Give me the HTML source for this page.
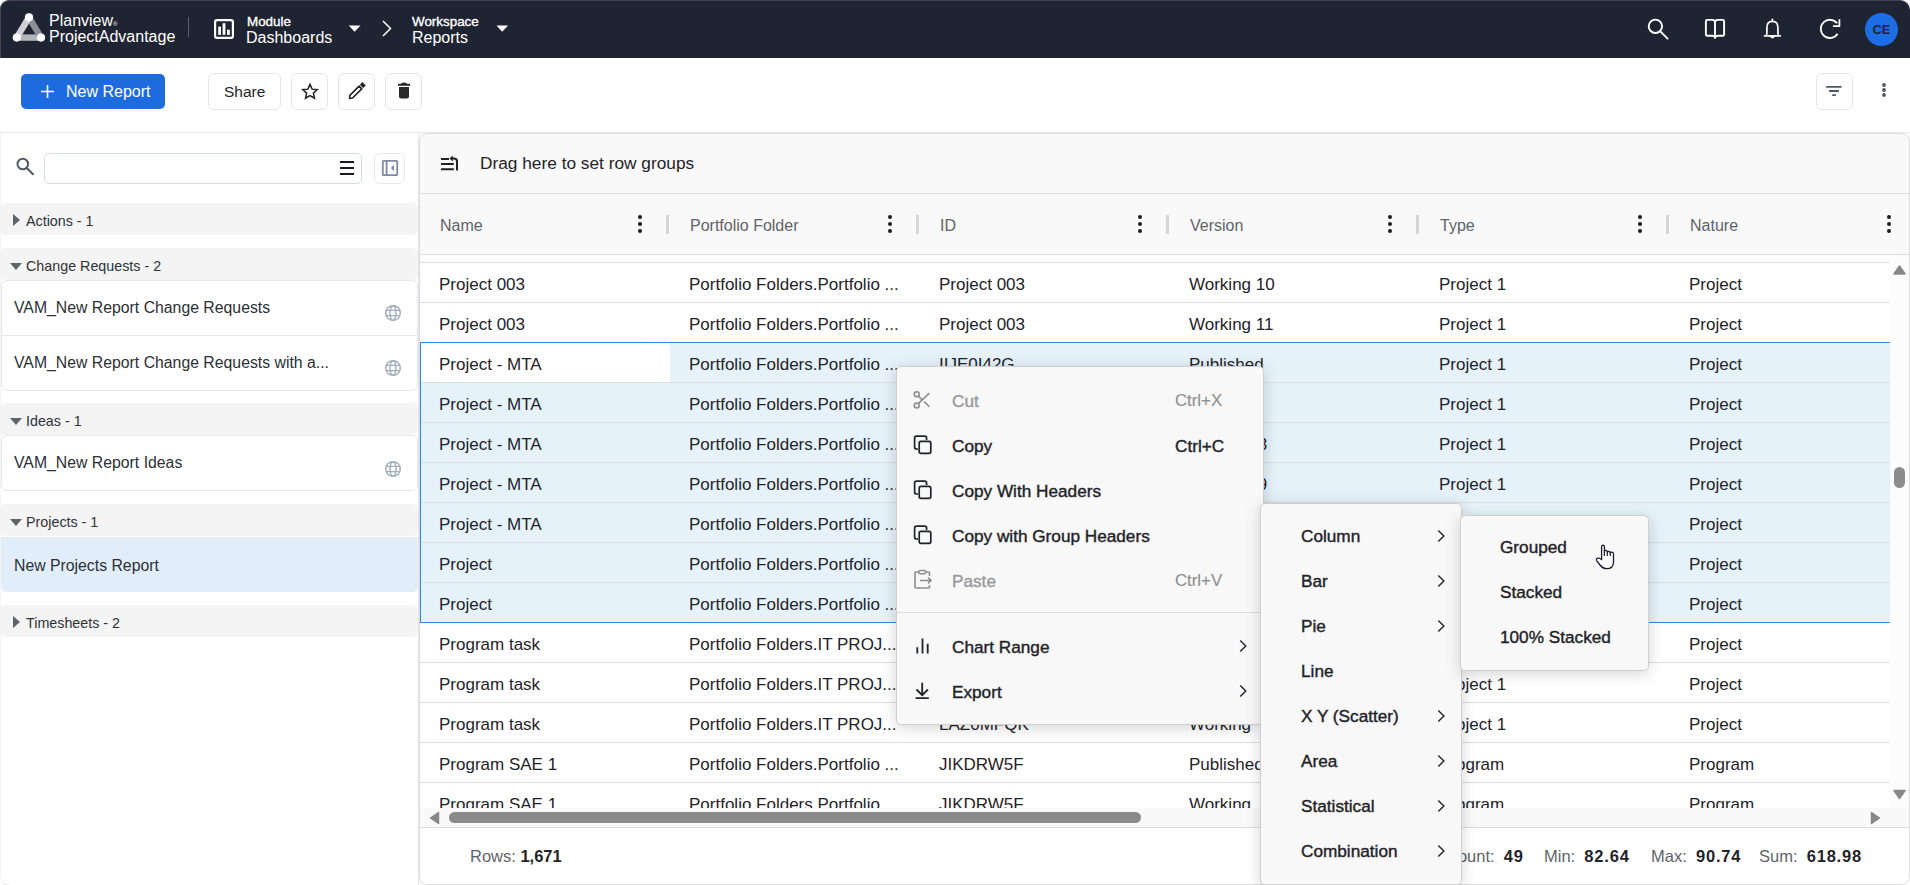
<!DOCTYPE html><html><head><meta charset="utf-8"><style>
*{box-sizing:border-box}
html,body{margin:0;padding:0}
body{width:1910px;height:885px;overflow:hidden;position:relative;background:#fff;font-family:"Liberation Sans",sans-serif;color:#1f2328}
.a{position:absolute}
.nw{white-space:nowrap}
svg.i{position:absolute;overflow:visible}
#top{left:0;top:0;width:1910px;height:58px;background:#1f2433;border-radius:9px 10px 0 0;border-top:1px solid #3f4451;border-left:1px solid #3f4451}
.tw{position:absolute;color:#fff;white-space:nowrap}
#tb{left:0;top:58px;width:1910px;height:75px;background:#fff;border-bottom:1px solid #e5e8ec}
.btn{position:absolute;border:1px solid #e3e6ea;border-radius:6px;background:#fff}
#lp{left:0;top:133px;width:419px;height:753px;background:#fff;border-right:1px solid #e3e6ea;border-left:1px solid #f4f4f4;border-bottom:1px solid #e2e2e2;border-bottom-left-radius:10px}
.gh{position:absolute;left:0;width:418px;height:32px;background:#f4f4f4;border-radius:6px;font-size:14.3px;color:#2d3338}
.gh .t{position:absolute;left:26px;top:9.5px;white-space:nowrap}
.tri-r{position:absolute;left:13px;top:11px;width:0;height:0;border-top:6px solid transparent;border-bottom:6px solid transparent;border-left:7px solid #5f6468}
.tri-d{position:absolute;left:10px;top:15px;width:0;height:0;border-left:6px solid transparent;border-right:6px solid transparent;border-top:7px solid #5f6468}
.it{position:absolute;left:1px;width:417px;background:#fff;border:1px solid #e5e8ec;font-size:15.8px;color:#2b3035}
.it .t{position:absolute;left:12px;white-space:nowrap}
#grid{left:419px;top:133px;width:1491px;height:752px;background:#f9f9f9;border:1px solid #dcdcdc;border-radius:8px;overflow:hidden}
.hdt{position:absolute;font-size:16px;color:#5f6368;white-space:nowrap}
.kb{position:absolute;width:4px;height:18px}
.kb i{position:absolute;left:0;width:4px;height:4px;border-radius:50%;background:#1d1d1f}
.rz{position:absolute;width:3px;height:19px;background:#d6d6d6}
.row{position:absolute;left:0;width:1470px;height:40px;background:#fff;border-bottom:1px solid #dedede}
.row.sel{background:#e5f2fa}
.cell{position:absolute;top:12px;font-size:17px;color:#1f2328;white-space:nowrap}
.menu{position:absolute;background:#f8f8f8;border:1px solid #cfcfcf;border-radius:5px;box-shadow:0 3px 16px rgba(0,0,0,.17)}
.mi{position:absolute;font-size:17.2px;font-weight:400;-webkit-text-stroke:.4px currentColor;color:#1f2328;white-space:nowrap}
.dis{color:#9a9a9a}
.chev{position:absolute;width:8px;height:12px}
</style></head><body>
<div id="top" class="a"></div>
<svg class="i" style="left:8px;top:8px" width="45" height="40" viewBox="8 8 45 40" ><line x1="16.8" y1="37.6" x2="41" y2="37.6" stroke="#b4b5b9" stroke-width="6.4"/><line x1="29" y1="17.3" x2="41" y2="37.6" stroke="#8d8f97" stroke-width="6.4"/><line x1="29" y1="17.3" x2="16.8" y2="37.6" stroke="#d0d1d5" stroke-width="6.4"/><circle cx="29" cy="17.3" r="4.1" fill="#fff"/><circle cx="16.8" cy="37.6" r="4.1" fill="#fff"/><circle cx="41" cy="37.6" r="4.1" fill="#fff"/></svg>
<div class="tw" style="left:49px;top:12px;font-size:16px">Planview<span style="font-size:6px">&#174;</span></div>
<div class="tw" style="left:49px;top:28px;font-size:16px">ProjectAdvantage</div>
<div class="a" style="left:188px;top:17px;width:1px;height:20px;background:#5a5f6b"></div>
<svg class="i" style="left:210px;top:15px" width="30" height="30" viewBox="210 15 30 30" ><rect x="215.1" y="20.1" width="17.8" height="17.8" rx="2" fill="none" stroke="#fff" stroke-width="2.2"/><rect x="218.2" y="26.6" width="2.8" height="8.3" fill="#fff"/><rect x="222.6" y="23.2" width="2.8" height="11.7" fill="#fff"/><rect x="227" y="29.7" width="2.8" height="5.2" fill="#fff"/></svg>
<div class="tw" style="left:247px;top:13.5px;font-size:13.4px;-webkit-text-stroke:.35px #fff">Module</div>
<div class="tw" style="left:246px;top:29px;font-size:16px">Dashboards</div>
<svg class="i" style="left:345px;top:22px" width="20" height="14" viewBox="345 22 20 14" ><path d="M348.7 25.4 L360.5 25.4 L354.6 31.8 Z" fill="#fff"/></svg>
<svg class="i" style="left:378px;top:18px" width="18" height="22" viewBox="378 18 18 22" ><path d="M383 21 L390.5 28.5 L383 36" fill="none" stroke="#fff" stroke-width="1.5"/></svg>
<div class="tw" style="left:412px;top:13.5px;font-size:13.4px;-webkit-text-stroke:.35px #fff">Workspace</div>
<div class="tw" style="left:412px;top:29px;font-size:16px">Reports</div>
<svg class="i" style="left:493px;top:22px" width="20" height="14" viewBox="493 22 20 14" ><path d="M496.5 25.4 L508 25.4 L502.2 31.8 Z" fill="#fff"/></svg>
<svg class="i" style="left:1640px;top:15px" width="35" height="30" viewBox="1640 15 35 30" ><circle cx="1655.4" cy="26.3" r="6.7" fill="none" stroke="#fff" stroke-width="1.9"/><path d="M1660.3 31.3 L1667.6 38.6" stroke="#fff" stroke-width="1.9" stroke-linecap="round"/></svg>
<svg class="i" style="left:1700px;top:15px" width="30" height="30" viewBox="1700 15 30 30" ><path d="M1715 22.5 Q1715 19.9 1712.5 19.9 L1707.3 19.9 Q1705.9 19.9 1705.9 21.3 L1705.9 34.4 Q1705.9 35.7 1707.3 35.7 L1712.3 35.7 Q1714.2 35.7 1715 37.8 Q1715.8 35.7 1717.7 35.7 L1722.7 35.7 Q1724.1 35.7 1724.1 34.4 L1724.1 21.3 Q1724.1 19.9 1722.7 19.9 L1717.5 19.9 Q1715 19.9 1715 22.5 Z M1715 22.5 L1715 37" fill="none" stroke="#fff" stroke-width="1.9" stroke-linejoin="round"/></svg>
<svg class="i" style="left:1758px;top:15px" width="30" height="30" viewBox="1758 15 30 30" ><path d="M1764.5 35.8 L1780.3 35.8 M1766.2 35.8 Q1766.9 34.5 1766.9 32 L1766.9 27.5 Q1766.9 21.3 1772.4 21.3 Q1777.9 21.3 1777.9 27.5 L1777.9 32 Q1777.9 34.5 1778.6 35.8 M1772.4 21.3 L1772.4 19.3 M1770.7 36.2 Q1772.4 39 1774.1 36.2" fill="none" stroke="#fff" stroke-width="1.7" stroke-linejoin="round" stroke-linecap="round"/></svg>
<svg class="i" style="left:1815px;top:15px" width="32" height="30" viewBox="1815 15 32 30" ><path d="M1837.6 33.7 A9.1 9.1 0 1 1 1837.1 23.3" fill="none" stroke="#fff" stroke-width="1.8"/><path d="M1832.9 26.1 L1839.4 26.1 L1839.4 19.2" fill="none" stroke="#fff" stroke-width="1.8" stroke-linejoin="round"/></svg>
<div class="a" style="left:1865px;top:12.5px;width:33px;height:33px;border-radius:50%;background:#1b6ee3"></div>
<div class="a" style="left:1865px;top:22px;width:33px;text-align:center;font-size:13px;font-weight:700;color:#1f2433">CE</div>
<div id="tb" class="a"></div>
<div class="a" style="left:21px;top:74px;width:144px;height:35px;background:#1e6be0;border-radius:5px"></div>
<svg class="i" style="left:38px;top:82px" width="20" height="20" viewBox="38 82 20 20" ><path d="M47.5 85 L47.5 98 M41 91.5 L54 91.5" stroke="#fff" stroke-width="1.6"/></svg>
<div class="tw" style="left:66px;top:83px;font-size:16px">New Report</div>
<div class="btn" style="left:208px;top:73px;width:73px;height:37px"></div>
<div class="a nw" style="left:224px;top:83px;font-size:15.5px;color:#1f2328">Share</div>
<div class="btn" style="left:291px;top:73px;width:37px;height:37px"></div>
<div class="btn" style="left:338px;top:73px;width:37px;height:37px"></div>
<div class="btn" style="left:385px;top:73px;width:37px;height:37px"></div>
<svg class="i" style="left:298px;top:80px" width="25" height="25" viewBox="298 80 25 25" ><path d="M310.00 84.40 L312.09 89.13 L317.23 89.65 L313.38 93.10 L314.47 98.15 L310.00 95.55 L305.53 98.15 L306.62 93.10 L302.77 89.65 L307.91 89.13 Z" fill="none" stroke="#222" stroke-width="1.5" stroke-linejoin="miter"/></svg>
<svg class="i" style="left:345px;top:80px" width="25" height="25" viewBox="345 80 25 25" ><g transform="translate(356.6 91.3) rotate(-45)"><path d="M5.4 -1.9 L-7.6 -1.9 L-10 0 L-7.6 1.9 L5.4 1.9 Z" fill="none" stroke="#222" stroke-width="1.6" stroke-linejoin="round"/><rect x="7" y="-2.4" width="3.6" height="4.8" fill="#222"/></g></svg>
<svg class="i" style="left:393px;top:80px" width="25" height="25" viewBox="393 80 25 25" ><path d="M398 84.8 L410.2 84.8" stroke="#2a2a2a" stroke-width="2"/><path d="M401.5 84 Q404 82.6 406.5 84" stroke="#2a2a2a" stroke-width="1.6" fill="none"/><path d="M399 87 L409 87 L409 96.5 Q409 98.4 407 98.4 L401 98.4 Q399 98.4 399 96.5 Z" fill="#2a2a2a"/></svg>
<div class="btn" style="left:1816px;top:73px;width:37px;height:37px"></div>
<svg class="i" style="left:1820px;top:80px" width="30" height="25" viewBox="1820 80 30 25" ><path d="M1826.2 86.9 L1841.6 86.9 M1829.1 91 L1838.9 91 M1832.2 95.1 L1835.9 95.1" stroke="#4f5863" stroke-width="1.9"/></svg>
<svg class="i" style="left:1878px;top:80px" width="12" height="20" viewBox="1878 80 12 20" ><circle cx="1884" cy="85" r="1.9" fill="#4f5863"/><circle cx="1884" cy="90" r="1.9" fill="#4f5863"/><circle cx="1884" cy="95" r="1.9" fill="#4f5863"/></svg>
<div id="lp" class="a"></div>
<svg class="i" style="left:12px;top:152px" width="28" height="28" viewBox="12 152 28 28" ><circle cx="22.8" cy="164" r="5.3" fill="none" stroke="#4d5a66" stroke-width="2"/><path d="M26.8 168 L33 174.2" stroke="#4d5a66" stroke-width="2" stroke-linecap="round"/></svg>
<div class="a" style="left:44px;top:153px;width:318px;height:31px;border:1px solid #d5dce3;border-radius:5px"></div>
<svg class="i" style="left:335px;top:155px" width="25" height="25" viewBox="335 155 25 25" ><path d="M340 162 L354 162 M340 168 L354 168 M340 174 L354 174" stroke="#1a1a24" stroke-width="2"/></svg>
<div class="btn" style="left:374px;top:153px;width:31px;height:31px;border-color:#e5e8ec"></div>
<svg class="i" style="left:378px;top:156px" width="25" height="25" viewBox="378 156 25 25" ><rect x="382.8" y="160.8" width="14.4" height="14.4" rx="1" fill="none" stroke="#7d8aa3" stroke-width="1.8"/><path d="M386.6 161 L386.6 175" stroke="#7d8aa3" stroke-width="1.8"/><path d="M394 164.8 L390.8 168 L394 171.2 Z" fill="#7d8aa3"/></svg>
<div class="gh" style="top:203px"><div class="tri-r"></div><div class="t">Actions - 1</div></div>
<div class="gh" style="top:248px"><div class="tri-d"></div><div class="t">Change Requests - 2</div></div>
<div class="it" style="top:280px;height:56px;border-radius:6px 6px 0 0"><div class="t" style="top:18px">VAM_New Report Change Requests</div></div>
<svg class="i" style="left:383px;top:303px" width="20" height="20" viewBox="383 303 20 20" ><circle cx="393" cy="313" r="7.3" fill="none" stroke="#a3afbd" stroke-width="1.5"/><ellipse cx="393" cy="313" rx="3" ry="7.3" fill="none" stroke="#a3afbd" stroke-width="1.4"/><path d="M386 310.4 L400 310.4 M386 315.6 L400 315.6" stroke="#a3afbd" stroke-width="1.4"/></svg>
<div class="it" style="top:335px;height:56px;border-radius:0 0 6px 6px"><div class="t" style="top:18px">VAM_New Report Change Requests with a...</div></div>
<svg class="i" style="left:383px;top:358px" width="20" height="20" viewBox="383 358 20 20" ><circle cx="393" cy="368" r="7.3" fill="none" stroke="#a3afbd" stroke-width="1.5"/><ellipse cx="393" cy="368" rx="3" ry="7.3" fill="none" stroke="#a3afbd" stroke-width="1.4"/><path d="M386 365.4 L400 365.4 M386 370.6 L400 370.6" stroke="#a3afbd" stroke-width="1.4"/></svg>
<div class="gh" style="top:403px"><div class="tri-d"></div><div class="t">Ideas - 1</div></div>
<div class="it" style="top:435px;height:56px;border-radius:6px"><div class="t" style="top:18px">VAM_New Report Ideas</div></div>
<svg class="i" style="left:383px;top:459px" width="20" height="20" viewBox="383 459 20 20" ><circle cx="393" cy="469" r="7.3" fill="none" stroke="#a3afbd" stroke-width="1.5"/><ellipse cx="393" cy="469" rx="3" ry="7.3" fill="none" stroke="#a3afbd" stroke-width="1.4"/><path d="M386 466.4 L400 466.4 M386 471.6 L400 471.6" stroke="#a3afbd" stroke-width="1.4"/></svg>
<div class="gh" style="top:504px"><div class="tri-d"></div><div class="t">Projects - 1</div></div>
<div class="a" style="left:1px;top:537px;width:417px;height:55px;background:#e1eefa;border-radius:0 0 5px 5px"></div>
<div class="a nw" style="left:14px;top:557px;font-size:15.8px;color:#2b3035">New Projects Report</div>
<div class="gh" style="top:605px"><div class="tri-r"></div><div class="t">Timesheets - 2</div></div>
<div id="grid" class="a">
<div class="a" style="left:0;top:59px;width:1491px;height:1px;background:#dedede"></div>
<svg class="i" style="left:18px;top:18px" width="25" height="25" viewBox="438 152 25 25" ><path d="M441 158.9 L449 158.9 M441 164.1 L453.8 164.1 M441 169.2 L453.8 169.2" stroke="#222" stroke-width="2"/><path d="M457 170.5 L457 161.5 Q457 158.5 454 158.5 L451.5 158.5" fill="none" stroke="#222" stroke-width="2"/><path d="M449.5 158.5 L452.8 155.6 L452.8 161.4 Z" fill="#222"/></svg>
<div class="a nw" style="left:60px;top:19px;font-size:17.3px;color:#1f2328">Drag here to set row groups</div>
<div class="a" style="left:0;top:120px;width:1491px;height:1px;background:#dedede"></div>
<div class="a" style="left:0;top:121px;width:1470px;height:7px;background:#fff"></div>
<div class="a" style="left:0;top:128px;width:1470px;height:1px;background:#dedede"></div>
<div class="hdt" style="left:20px;top:83px">Name</div>
<div class="kb" style="left:218px;top:81px"><i style="top:0"></i><i style="top:7px"></i><i style="top:14px"></i></div>
<div class="rz" style="left:246px;top:81px"></div>
<div class="hdt" style="left:270px;top:83px">Portfolio Folder</div>
<div class="kb" style="left:468px;top:81px"><i style="top:0"></i><i style="top:7px"></i><i style="top:14px"></i></div>
<div class="rz" style="left:496px;top:81px"></div>
<div class="hdt" style="left:520px;top:83px">ID</div>
<div class="kb" style="left:718px;top:81px"><i style="top:0"></i><i style="top:7px"></i><i style="top:14px"></i></div>
<div class="rz" style="left:746px;top:81px"></div>
<div class="hdt" style="left:770px;top:83px">Version</div>
<div class="kb" style="left:968px;top:81px"><i style="top:0"></i><i style="top:7px"></i><i style="top:14px"></i></div>
<div class="rz" style="left:996px;top:81px"></div>
<div class="hdt" style="left:1020px;top:83px">Type</div>
<div class="kb" style="left:1218px;top:81px"><i style="top:0"></i><i style="top:7px"></i><i style="top:14px"></i></div>
<div class="rz" style="left:1246px;top:81px"></div>
<div class="hdt" style="left:1270px;top:83px">Nature</div>
<div class="kb" style="left:1467px;top:81px"><i style="top:0"></i><i style="top:7px"></i><i style="top:14px"></i></div>
<div class="a" style="left:0;top:129px;width:1470px;height:545px;overflow:hidden">
<div class="row" style="top:0px">
<div class="cell" style="left:19px">Project 003</div>
<div class="cell" style="left:269px">Portfolio Folders.Portfolio ...</div>
<div class="cell" style="left:519px">Project 003</div>
<div class="cell" style="left:769px">Working 10</div>
<div class="cell" style="left:1019px">Project 1</div>
<div class="cell" style="left:1269px">Project</div>
</div>
<div class="row" style="top:40px">
<div class="cell" style="left:19px">Project 003</div>
<div class="cell" style="left:269px">Portfolio Folders.Portfolio ...</div>
<div class="cell" style="left:519px">Project 003</div>
<div class="cell" style="left:769px">Working 11</div>
<div class="cell" style="left:1019px">Project 1</div>
<div class="cell" style="left:1269px">Project</div>
</div>
<div class="row sel" style="top:80px">
<div class="a" style="left:0;top:0;width:250px;height:39px;background:#fff"></div>
<div class="cell" style="left:19px">Project - MTA</div>
<div class="cell" style="left:269px">Portfolio Folders.Portfolio ...</div>
<div class="cell" style="left:519px">IIJE0I42G</div>
<div class="cell" style="left:769px">Published</div>
<div class="cell" style="left:1019px">Project 1</div>
<div class="cell" style="left:1269px">Project</div>
</div>
<div class="row sel" style="top:120px">
<div class="cell" style="left:19px">Project - MTA</div>
<div class="cell" style="left:269px">Portfolio Folders.Portfolio ...</div>
<div class="cell" style="left:519px">IIJE0I42G</div>
<div class="cell" style="left:769px">Working</div>
<div class="cell" style="left:1019px">Project 1</div>
<div class="cell" style="left:1269px">Project</div>
</div>
<div class="row sel" style="top:160px">
<div class="cell" style="left:19px">Project - MTA</div>
<div class="cell" style="left:269px">Portfolio Folders.Portfolio ...</div>
<div class="cell" style="left:519px">IIJE0I43</div>
<div class="cell" style="left:771px">Working 3</div>
<div class="cell" style="left:1019px">Project 1</div>
<div class="cell" style="left:1269px">Project</div>
</div>
<div class="row sel" style="top:200px">
<div class="cell" style="left:19px">Project - MTA</div>
<div class="cell" style="left:269px">Portfolio Folders.Portfolio ...</div>
<div class="cell" style="left:519px">IIJE0I49</div>
<div class="cell" style="left:771px">Working 9</div>
<div class="cell" style="left:1019px">Project 1</div>
<div class="cell" style="left:1269px">Project</div>
</div>
<div class="row sel" style="top:240px">
<div class="cell" style="left:19px">Project - MTA</div>
<div class="cell" style="left:269px">Portfolio Folders.Portfolio ...</div>
<div class="cell" style="left:519px">IIJE0I50</div>
<div class="cell" style="left:769px">Working</div>
<div class="cell" style="left:1019px">Project 1</div>
<div class="cell" style="left:1269px">Project</div>
</div>
<div class="row sel" style="top:280px">
<div class="cell" style="left:19px">Project</div>
<div class="cell" style="left:269px">Portfolio Folders.Portfolio ...</div>
<div class="cell" style="left:519px">PROJ0001</div>
<div class="cell" style="left:769px">Published</div>
<div class="cell" style="left:1019px">Project 1</div>
<div class="cell" style="left:1269px">Project</div>
</div>
<div class="row sel" style="top:320px">
<div class="cell" style="left:19px">Project</div>
<div class="cell" style="left:269px">Portfolio Folders.Portfolio ...</div>
<div class="cell" style="left:519px">PROJ0001</div>
<div class="cell" style="left:769px">Working</div>
<div class="cell" style="left:1019px">Project 1</div>
<div class="cell" style="left:1269px">Project</div>
</div>
<div class="row" style="top:360px">
<div class="cell" style="left:19px">Program task</div>
<div class="cell" style="left:269px">Portfolio Folders.IT PROJ...</div>
<div class="cell" style="left:519px">LAZ0MFQK</div>
<div class="cell" style="left:769px">Published</div>
<div class="cell" style="left:1019px">Project 1</div>
<div class="cell" style="left:1269px">Project</div>
</div>
<div class="row" style="top:400px">
<div class="cell" style="left:19px">Program task</div>
<div class="cell" style="left:269px">Portfolio Folders.IT PROJ...</div>
<div class="cell" style="left:519px">LAZ0MFQK</div>
<div class="cell" style="left:769px">Working</div>
<div class="cell" style="left:1019px">Project 1</div>
<div class="cell" style="left:1269px">Project</div>
</div>
<div class="row" style="top:440px">
<div class="cell" style="left:19px">Program task</div>
<div class="cell" style="left:269px">Portfolio Folders.IT PROJ...</div>
<div class="cell" style="left:519px">LAZ0MFQK</div>
<div class="cell" style="left:769px">Working</div>
<div class="cell" style="left:1019px">Project 1</div>
<div class="cell" style="left:1269px">Project</div>
</div>
<div class="row" style="top:480px">
<div class="cell" style="left:19px">Program SAE 1</div>
<div class="cell" style="left:269px">Portfolio Folders.Portfolio ...</div>
<div class="cell" style="left:519px">JIKDRW5F</div>
<div class="cell" style="left:769px">Published</div>
<div class="cell" style="left:1019px">Program</div>
<div class="cell" style="left:1269px">Program</div>
</div>
<div class="row" style="top:520px">
<div class="cell" style="left:19px">Program SAE 1</div>
<div class="cell" style="left:269px">Portfolio Folders.Portfolio ...</div>
<div class="cell" style="left:519px">JIKDRW5F</div>
<div class="cell" style="left:769px">Working</div>
<div class="cell" style="left:1019px">Program</div>
<div class="cell" style="left:1269px">Program</div>
</div>
</div>
<div class="a" style="left:0;top:208px;width:1470px;height:281px;border:1px solid #2d8ae6;border-right:none"></div>
<div class="a" style="left:1470px;top:121px;width:20px;height:553px;background:#fcfcfc"></div>
<svg class="i" style="left:1470px;top:128px" width="20" height="15" viewBox="1890 262 20 15" ><path d="M1899.5 266 L1905 274 L1894 274 Z" fill="#888" stroke="#888" stroke-width="1.5" stroke-linejoin="round"/></svg>
<svg class="i" style="left:1470px;top:651px" width="20" height="15" viewBox="1890 785 20 15" ><path d="M1899.5 798.5 L1905 790.5 L1894 790.5 Z" fill="#888" stroke="#888" stroke-width="1.5" stroke-linejoin="round"/></svg>
<div class="a" style="left:1474px;top:333px;width:11px;height:21px;border-radius:6px;background:#8c8c8c"></div>
<div class="a" style="left:0;top:674px;width:1491px;height:20px;background:#f9f9f9;border-bottom:1px solid #dedede"></div>
<svg class="i" style="left:6px;top:674px" width="18" height="20" viewBox="426 808 18 20" ><path d="M430.5 818 L438.5 812.5 L438.5 823.5 Z" fill="#888" stroke="#888" stroke-width="1.5" stroke-linejoin="round"/></svg>
<svg class="i" style="left:1446px;top:674px" width="18" height="20" viewBox="1866 808 18 20" ><path d="M1879.5 818 L1871.5 812.5 L1871.5 823.5 Z" fill="#888" stroke="#888" stroke-width="1.5" stroke-linejoin="round"/></svg>
<div class="a" style="left:29px;top:678px;width:692px;height:11px;border-radius:6px;background:#8a8a8a"></div>
<div class="a" style="left:0;top:694px;width:1491px;height:57px;background:#fff"></div>
<div class="a nw" style="left:50px;top:713px;font-size:16.5px;color:#5f6368">Rows: <b style="color:#1f2328">1,671</b></div>
<div class="a nw" style="left:1026px;top:713px;font-size:16.5px;color:#5f6368">Count:&nbsp; <b style="color:#1f2328;letter-spacing:.8px">49</b></div>
<div class="a nw" style="left:1124px;top:713px;font-size:16.5px;color:#5f6368">Min:&nbsp; <b style="color:#1f2328;letter-spacing:.8px">82.64</b></div>
<div class="a nw" style="left:1231px;top:713px;font-size:16.5px;color:#5f6368">Max:&nbsp; <b style="color:#1f2328;letter-spacing:.8px">90.74</b></div>
<div class="a nw" style="left:1339px;top:713px;font-size:16.5px;color:#5f6368">Sum:&nbsp; <b style="color:#1f2328;letter-spacing:.8px">618.98</b></div>
</div>
<div class="menu" style="left:896px;top:366px;width:368px;height:359px"></div>
<div class="mi dis" style="left:952px;top:390.5px">Cut</div>
<div class="mi" style="left:1175px;top:390.5px;font-size:16.8px;-webkit-text-stroke:.15px currentColor;color:#8f8f8f">Ctrl+X</div>
<div class="mi" style="left:952px;top:435.5px">Copy</div>
<div class="mi" style="left:1175px;top:435.5px;">Ctrl+C</div>
<div class="mi" style="left:952px;top:480.5px">Copy With Headers</div>
<div class="mi" style="left:952px;top:525.5px">Copy with Group Headers</div>
<div class="mi dis" style="left:952px;top:570.5px">Paste</div>
<div class="mi" style="left:1175px;top:570.5px;font-size:16.8px;-webkit-text-stroke:.15px currentColor;color:#8f8f8f">Ctrl+V</div>
<div class="mi" style="left:952px;top:636.5px">Chart Range</div>
<svg class="i" style="left:1236px;top:638px" width="14" height="16" viewBox="1236 638 14 16" ><path d="M1240.2 640.4 L1245.8 646 L1240.2 651.6" fill="none" stroke="#1f2328" stroke-width="1.4"/></svg>
<div class="mi" style="left:952px;top:681.5px">Export</div>
<svg class="i" style="left:1236px;top:683px" width="14" height="16" viewBox="1236 683 14 16" ><path d="M1240.2 685.4 L1245.8 691 L1240.2 696.6" fill="none" stroke="#1f2328" stroke-width="1.4"/></svg>
<div class="a" style="left:897px;top:612px;width:366px;height:1px;background:#dcdcdc"></div>
<svg class="i" style="left:910px;top:388px" width="24" height="24" viewBox="910 388 24 24" ><circle cx="916.7" cy="394.3" r="2.5" fill="none" stroke="#8c8c8c" stroke-width="1.5"/><circle cx="916.7" cy="405.5" r="2.5" fill="none" stroke="#8c8c8c" stroke-width="1.5"/><path d="M918.6 403.4 L929.4 393.1 M918.6 396.4 L922 399.6 M924.2 401.6 L929.4 406.7" stroke="#8c8c8c" stroke-width="1.5"/></svg>
<svg class="i" style="left:910px;top:432px" width="26" height="26" viewBox="910 432 26 26" ><path d="M918 449 L916.6 449 Q914.6 449 914.6 447 L914.6 438.2 Q914.6 436.2 916.6 436.2 L924.6 436.2 Q926.6 436.2 926.6 438.2 L926.6 440" fill="none" stroke="#1f2328" stroke-width="1.7"/><rect x="919.2" y="441.4" width="11.6" height="12" rx="1.8" fill="none" stroke="#1f2328" stroke-width="1.7"/></svg>
<svg class="i" style="left:910px;top:477px" width="26" height="26" viewBox="910 477 26 26" ><path d="M918 494 L916.6 494 Q914.6 494 914.6 492 L914.6 483.2 Q914.6 481.2 916.6 481.2 L924.6 481.2 Q926.6 481.2 926.6 483.2 L926.6 485" fill="none" stroke="#1f2328" stroke-width="1.7"/><rect x="919.2" y="486.4" width="11.6" height="12" rx="1.8" fill="none" stroke="#1f2328" stroke-width="1.7"/></svg>
<svg class="i" style="left:910px;top:522px" width="26" height="26" viewBox="910 522 26 26" ><path d="M918 539 L916.6 539 Q914.6 539 914.6 537 L914.6 528.2 Q914.6 526.2 916.6 526.2 L924.6 526.2 Q926.6 526.2 926.6 528.2 L926.6 530" fill="none" stroke="#1f2328" stroke-width="1.7"/><rect x="919.2" y="531.4" width="11.6" height="12" rx="1.8" fill="none" stroke="#1f2328" stroke-width="1.7"/></svg>
<svg class="i" style="left:910px;top:568px" width="26" height="24" viewBox="910 568 26 24" ><path d="M929.5 576 L929.5 573 Q929.5 572 928.5 572 L916 572 Q915 572 915 573 L915 587 Q915 588 916 588 L928.5 588 Q929.5 588 929.5 587 L929.5 585" fill="none" stroke="#8c8c8c" stroke-width="1.6"/><rect x="919" y="570.5" width="6.5" height="3.2" rx="1" fill="#f8f8f8" stroke="#8c8c8c" stroke-width="1.5"/><path d="M920 580.5 L931 580.5 M928 577.5 L931 580.5 L928 583.5" fill="none" stroke="#8c8c8c" stroke-width="1.6"/></svg>
<svg class="i" style="left:910px;top:634px" width="24" height="24" viewBox="910 634 24 24" ><path d="M917.3 647.3 L917.3 653.4 M922.5 638.5 L922.5 653.4 M927.7 643.7 L927.7 653.4" stroke="#1f2328" stroke-width="1.8"/></svg>
<svg class="i" style="left:910px;top:678px" width="24" height="24" viewBox="910 678 24 24" ><path d="M922.2 682.7 L922.2 695.5 M916.5 689.5 L922.2 695.2 L927.9 689.5 M915.6 698.2 L928.8 698.2" fill="none" stroke="#1f2328" stroke-width="1.8"/></svg>
<div class="menu" style="left:1260px;top:503px;width:202px;height:382px"></div>
<div class="mi" style="left:1301px;top:526px">Column</div>
<svg class="i" style="left:1434px;top:528px" width="14" height="16" viewBox="1434 528 14 16" ><path d="M1438.3 530.4 L1443.9 536 L1438.3 541.6" fill="none" stroke="#1f2328" stroke-width="1.4"/></svg>
<div class="mi" style="left:1301px;top:571px">Bar</div>
<svg class="i" style="left:1434px;top:573px" width="14" height="16" viewBox="1434 573 14 16" ><path d="M1438.3 575.4 L1443.9 581 L1438.3 586.6" fill="none" stroke="#1f2328" stroke-width="1.4"/></svg>
<div class="mi" style="left:1301px;top:616px">Pie</div>
<svg class="i" style="left:1434px;top:618px" width="14" height="16" viewBox="1434 618 14 16" ><path d="M1438.3 620.4 L1443.9 626 L1438.3 631.6" fill="none" stroke="#1f2328" stroke-width="1.4"/></svg>
<div class="mi" style="left:1301px;top:661px">Line</div>
<div class="mi" style="left:1301px;top:706px">X Y (Scatter)</div>
<svg class="i" style="left:1434px;top:708px" width="14" height="16" viewBox="1434 708 14 16" ><path d="M1438.3 710.4 L1443.9 716 L1438.3 721.6" fill="none" stroke="#1f2328" stroke-width="1.4"/></svg>
<div class="mi" style="left:1301px;top:751px">Area</div>
<svg class="i" style="left:1434px;top:753px" width="14" height="16" viewBox="1434 753 14 16" ><path d="M1438.3 755.4 L1443.9 761 L1438.3 766.6" fill="none" stroke="#1f2328" stroke-width="1.4"/></svg>
<div class="mi" style="left:1301px;top:796px">Statistical</div>
<svg class="i" style="left:1434px;top:798px" width="14" height="16" viewBox="1434 798 14 16" ><path d="M1438.3 800.4 L1443.9 806 L1438.3 811.6" fill="none" stroke="#1f2328" stroke-width="1.4"/></svg>
<div class="mi" style="left:1301px;top:841px">Combination</div>
<svg class="i" style="left:1434px;top:843px" width="14" height="16" viewBox="1434 843 14 16" ><path d="M1438.3 845.4 L1443.9 851 L1438.3 856.6" fill="none" stroke="#1f2328" stroke-width="1.4"/></svg>
<div class="menu" style="left:1460px;top:515px;width:189px;height:156px"></div>
<div class="mi" style="left:1500px;top:537px">Grouped</div>
<div class="mi" style="left:1500px;top:582px">Stacked</div>
<div class="mi" style="left:1500px;top:627px">100% Stacked</div>
<svg class="i" style="left:1590px;top:540px" width="30" height="35" viewBox="1590 540 30 35" ><path d="M1601.6 559.5 L1601.6 546.6 Q1601.6 545.2 1603 545.2 Q1604.4 545.2 1604.4 546.6 L1604.4 551.5 Q1604.4 550.4 1605.8 550.4 Q1607.3 550.4 1607.3 551.8 L1607.3 552.4 Q1607.3 551.3 1608.7 551.3 Q1610.2 551.3 1610.2 552.7 L1610.2 553.3 Q1610.2 552.2 1611.8 552.2 Q1613.5 552.2 1613.5 554 L1613.5 562 Q1613.5 568.7 1606.5 568.7 Q1603 568.7 1600 565 L1596.8 560.8 Q1595.8 559 1597.5 558.2 Q1599 557.6 1601.6 559.5 Z" fill="#fff" stroke="#1a1a2e" stroke-width="1.3" stroke-linejoin="round"/><path d="M1604.4 551.5 L1604.4 556 M1607.3 552.4 L1607.3 556 M1610.2 553.3 L1610.2 556" stroke="#1a1a2e" stroke-width="1.2"/></svg>
</body></html>
